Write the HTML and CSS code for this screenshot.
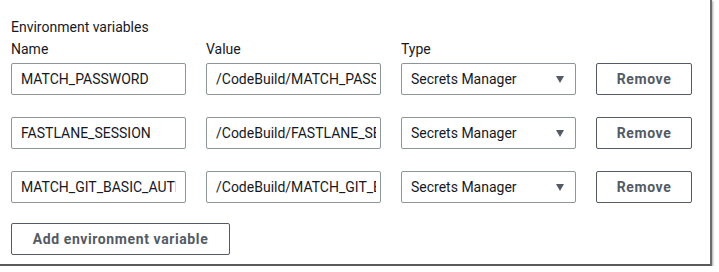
FILE: index.html
```html
<!DOCTYPE html>
<html>
<head>
<meta charset="utf-8">
<link rel="stylesheet" href="styles.css">
</head>
<body>
<div class="panel">
  <div class="heading">Environment variables</div>
  <div class="grid">
    <div class="label">Name</div>
    <div class="label">Value</div>
    <div class="label">Type</div>
    <div></div>

    <div class="field"><span class="clip">MATCH_PASSWORD</span></div>
    <div class="field value"><span class="clip">/CodeBuild/MATCH_PASSWORD</span></div>
    <div class="select"><span>Secrets Manager</span><span class="caret"></span></div>
    <button class="btn">Remove</button>

    <div class="field"><span class="clip">FASTLANE_SESSION</span></div>
    <div class="field value"><span class="clip">/CodeBuild/FASTLANE_SESSION</span></div>
    <div class="select"><span>Secrets Manager</span><span class="caret"></span></div>
    <button class="btn">Remove</button>

    <div class="field"><span class="clip">MATCH_GIT_BASIC_AUTHORIZATION</span></div>
    <div class="field value"><span class="clip">/CodeBuild/MATCH_GIT_BASIC_AUTHORIZATION</span></div>
    <div class="select"><span>Secrets Manager</span><span class="caret"></span></div>
    <button class="btn">Remove</button>
  </div>
  <button class="btn add">Add environment variable</button>
</div>
</body>
</html>
```
FILE: styles.css
```css
html, body {
  margin: 0;
  padding: 0;
  background: #ffffff;
}
body {
  font-family: Roboto, "Liberation Sans", sans-serif;
  font-size: 14px;
  color: #16191f;
}
.panel {
  box-sizing: border-box;
  width: 712px;
  height: 266px;
  padding: 17px 0 0 11px;
  border-right: 2px solid #6b6b6b;
  border-bottom: 2px solid #5a5a5a;
  box-shadow: 1px 1px 2px rgba(0, 0, 0, 0.35);
}
.heading {
  line-height: 20px;
}
.label {
  line-height: 20px;
  margin-top: 2px;
}
.grid {
  display: grid;
  grid-template-columns: 175px 175px 175px 96px;
  column-gap: 20px;
  row-gap: 22px;
}
.grid > .label {
  margin-bottom: -18px;
}
.field {
  box-sizing: border-box;
  height: 32px;
  border: 1px solid #8d9696;
  border-radius: 2px;
  padding: 0 9px;
  display: flex;
  align-items: center;
}
.field.value {
  padding: 0 4px 0 9px;
}
.clip {
  display: block;
  overflow: hidden;
  white-space: nowrap;
  width: 100%;
}
.select {
  box-sizing: border-box;
  height: 32px;
  border: 1px solid #8d9696;
  border-radius: 2px;
  padding: 0 11px 0 9px;
  display: flex;
  align-items: center;
  justify-content: space-between;
}
.caret {
  width: 0;
  height: 0;
  border-left: 4.5px solid transparent;
  border-right: 4.5px solid transparent;
  border-top: 7px solid #545b64;
}
.btn {
  box-sizing: border-box;
  height: 32px;
  border: 1px solid #545b64;
  border-radius: 2px;
  background: #ffffff;
  color: #545b64;
  font-family: inherit;
  font-size: 14px;
  font-weight: 700;
  letter-spacing: 0.6px;
  padding: 0 16px;
  margin: 0;
  white-space: nowrap;
}
.add {
  margin-top: 20px;
  width: 219px;
}
```
